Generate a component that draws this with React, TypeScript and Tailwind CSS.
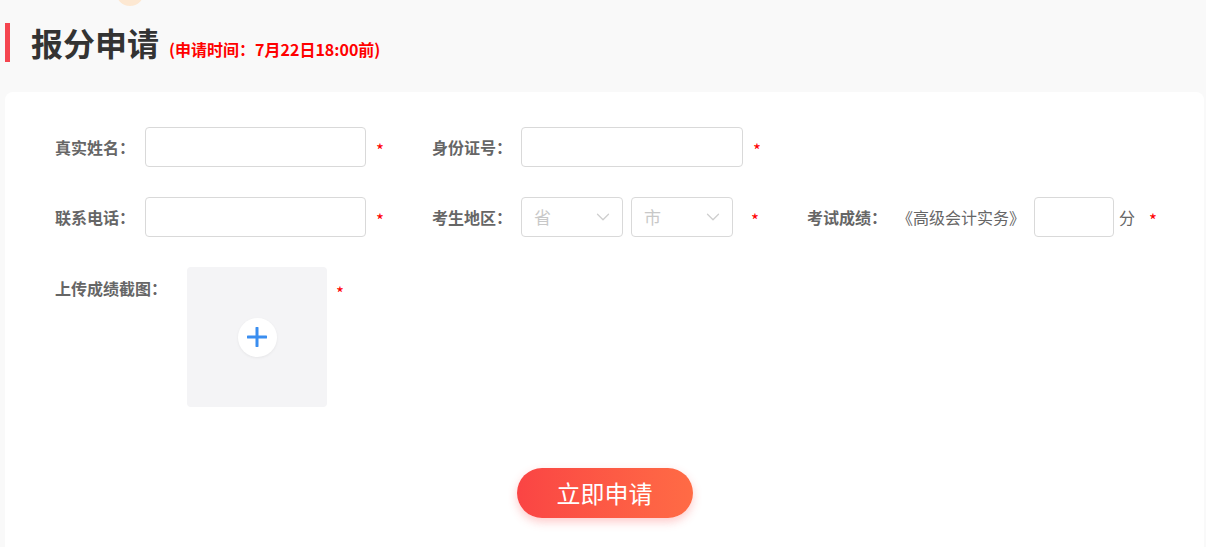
import { ChevronDown } from "lucide-react"

const font = { fontFamily: '"Noto Sans CJK SC", "Noto Sans", sans-serif' }

function Star({ className = "" }: { className?: string }) {
  return <span className={`pt-[4px] text-[17px] leading-none text-[#ff0000] ${className}`}>*</span>
}

function Label({ children, className = "" }: { children: React.ReactNode; className?: string }) {
  return (
    <span className={`shrink-0 text-[16px] font-bold text-[#666] ${className}`}>{children}</span>
  )
}

function TextInput({ width }: { width: string }) {
  return (
    <input
      type="text"
      className={`h-10 ${width} rounded-[4px] border border-[#d9d9d9] bg-white px-3 text-[15px] text-[#333] outline-none`}
    />
  )
}

function Select({ placeholder }: { placeholder: string }) {
  return (
    <div className="flex h-10 w-[102px] items-center justify-between rounded-[4px] border border-[#d9d9d9] bg-white pl-3 pr-2">
      <span className="text-[17px] text-[#c8c8c8]">{placeholder}</span>
      <ChevronDown className="h-[22px] w-[22px] text-[#cfcfcf]" strokeWidth={1.4} />
    </div>
  )
}

export default function App() {
  return (
    <div className="relative min-h-[547px] overflow-hidden bg-[#f9f9f9]" style={font}>
      {/* decorative blob peeking from above */}
      <div className="absolute left-[116px] top-[-22px] h-[28px] w-[28px] rounded-full bg-[#fde8d2]" />

      {/* heading */}
      <div className="flex items-center pl-[5px] pt-[23px]">
        <div className="h-[39px] w-[5px] bg-[#f5454f]" />
        <div className="ml-[21px] flex items-baseline">
          <h1 className="text-[32px] font-bold leading-[39px] text-[#333]">报分申请</h1>
          <span className="ml-[10px] text-[16px] font-bold text-[#ff0000]">(申请时间：7月22日18:00前)</span>
        </div>
      </div>

      {/* form card */}
      <div className="ml-[5px] mr-[2px] mt-[30px] rounded-[8px] bg-white pb-10 pl-[50px] pt-[35px]">
        <div className="flex flex-col gap-[30px]">
          {/* row 1 */}
          <div className="flex items-center">
            <div className="flex w-[377px] items-center">
              <Label className="w-[90px]">真实姓名：</Label>
              <TextInput width="w-[221px]" />
              <Star className="ml-[10px]" />
            </div>
            <div className="flex items-center">
              <Label className="w-[89px]">身份证号：</Label>
              <TextInput width="w-[222px]" />
              <Star className="ml-[10px]" />
            </div>
          </div>

          {/* row 2 */}
          <div className="flex items-center">
            <div className="flex w-[377px] items-center">
              <Label className="w-[90px]">联系电话：</Label>
              <TextInput width="w-[221px]" />
              <Star className="ml-[10px]" />
            </div>
            <div className="flex w-[375px] items-center">
              <Label className="w-[89px]">考生地区：</Label>
              <Select placeholder="省" />
              <div className="ml-[8px]">
                <Select placeholder="市" />
              </div>
              <Star className="ml-[18px]" />
            </div>
            <div className="flex items-center">
              <Label className="w-[90px]">考试成绩：</Label>
              <span className="text-[16px] text-[#666]">《高级会计实务》</span>
              <input
                type="text"
                className="ml-[9px] h-10 w-[80px] rounded-[4px] border border-[#d9d9d9] bg-white px-2 text-[15px] outline-none"
              />
              <span className="ml-[5px] text-[16px] text-[#666]">分</span>
              <Star className="ml-[14px]" />
            </div>
          </div>

          {/* row 3 */}
          <div className="flex items-start">
            <Label className="w-[132px] leading-[42px]">上传成绩截图：</Label>
            <button className="flex h-[140px] w-[140px] items-center justify-center rounded-[4px] bg-[#f4f4f6]">
              <span className="flex h-[39px] w-[39px] items-center justify-center rounded-full bg-white shadow-[0_1px_3px_rgba(0,0,0,0.06)]">
                <svg width="20" height="20" viewBox="0 0 20 20" fill="none">
                  <path d="M10 1v18M1 10h18" stroke="#3a8ef0" strokeWidth="3" strokeLinecap="round" />
                </svg>
              </span>
            </button>
            <Star className="ml-[9px] mt-[13px]" />
          </div>
        </div>

        {/* submit */}
        <div className="mt-[61px] flex justify-center pr-[50px]">
          <button className="h-[50px] w-[176px] rounded-full bg-gradient-to-r from-[#fa4444] to-[#ff6b45] text-[24px] text-white shadow-[0_4px_10px_rgba(250,70,70,0.28)]">
            立即申请
          </button>
        </div>
      </div>
    </div>
  )
}
